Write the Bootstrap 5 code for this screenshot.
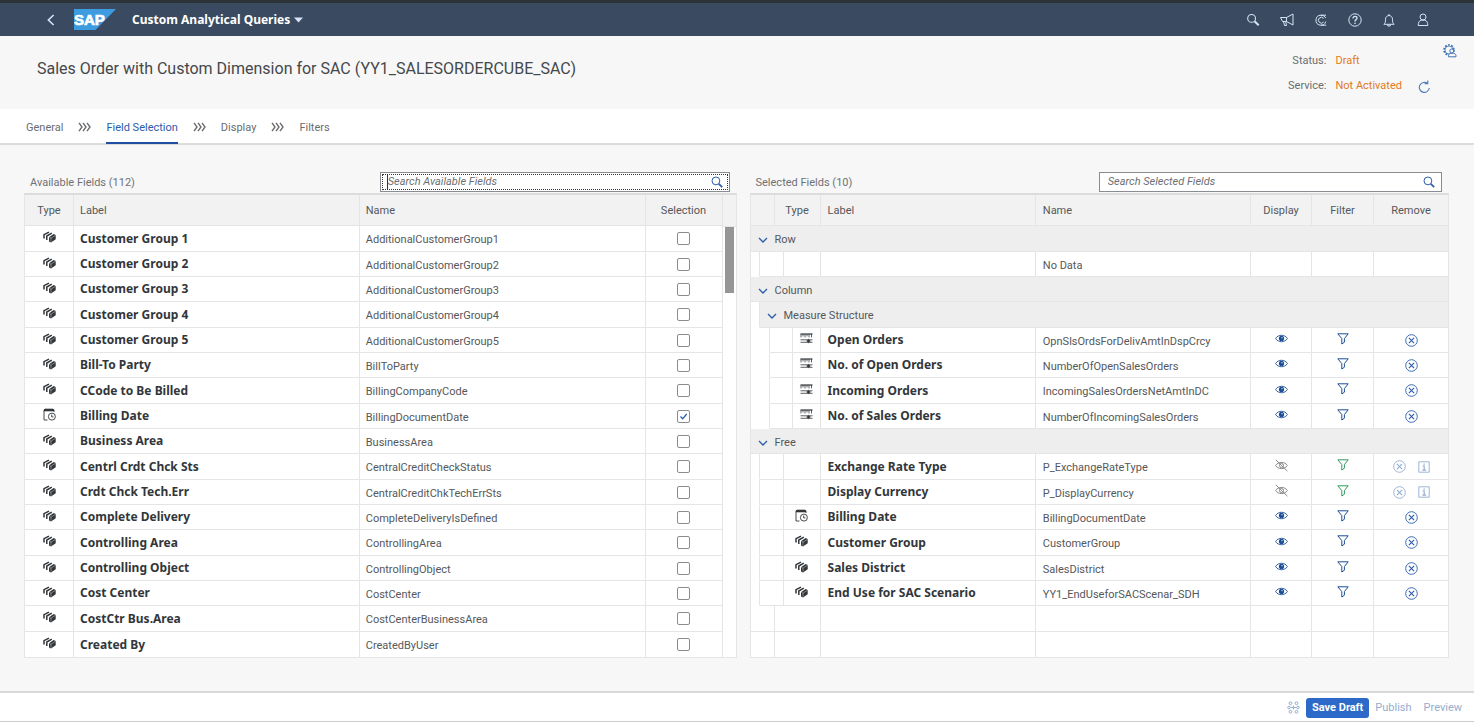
<!DOCTYPE html>
<html lang="en">
<head>
<meta charset="utf-8">
<meta name="viewport" content="width=device-width, initial-scale=1">
<title>Custom Analytical Queries</title>
<link rel="stylesheet" href="https://cdn.jsdelivr.net/npm/bootstrap@5.3.0/dist/css/bootstrap.min.css">
<style>
:root { --line: #e5e5e5; --blue: #2a5ca8; --ink: #32363a; --soft: #6a6d70; --orange: #e07b1c; }
body { font-family: Roboto, "Liberation Sans", sans-serif; font-size: 11px; line-height: 16px; color: #55585b; background: #f7f7f7; }
svg { display: block; fill: none; stroke: currentColor; }
button { font-size: inherit; line-height: inherit; }
.plain { border: 0; background: none; padding: 0; color: inherit; display: block; }
.shell { background: #3a4a60; border-top: 3px solid #2c3336; height: 36px; color: #d5e4f5; padding: 0 42px 0 44px; }
.app-title { font: 700 12px/16px "Noto Sans", sans-serif; color: #fff; }
.shell-tools { gap: 16px; }
.object-head { height: 73px; padding: 0 17px 0 37px; }
.object-head h1 { font-size: 16px; line-height: 20px; font-weight: 400; color: #45484b; padding-bottom: 7px; }
.state { display: grid; grid-template-columns: auto auto; column-gap: 9px; row-gap: 9px; margin: 2px 5px 0 0; }
.state dt { font-weight: 400; text-align: right; color: var(--soft); }
.state dd { margin: 0; color: var(--orange); }
.steps { height: 36px; padding: 0 26px; gap: 15px; background: #fff; border-bottom: 2px solid #dcdcdc; }
.steps a { color: var(--soft); text-decoration: none; line-height: 16px; padding-top: 11px; height: 35px; display: block; }
.steps a.active { color: var(--blue); border-bottom: 2px solid #1f4ea3; }
.steps svg { color: #6a6d70; margin-top: 2px; }
main { padding: 26px 25px 33px 24px; gap: 13px; }
.pane { min-width: 0; }
.pane-left { flex: 712 1 0; }
.pane-right { flex: 699 1 0; }
.pane-head { height: 22px; padding-left: 6px; padding-right: 7px; color: #6f7275; }
.find { width: 50%; height: 20px; background: #fff; border: 1px solid #898c90; color: var(--blue); padding: 0 6px; margin-top: 1px; }
.find input { flex: 1; min-width: 0; border: 0; outline: 0; background: none; padding: 0 2px; height: 16px; color: var(--ink); }
.find input::placeholder { font-style: italic; color: #6c6f72; opacity: 1; }
.find.focused { outline: 1px dotted #333; outline-offset: -3px; }
.find.focused input { border-left: 1px solid #333; padding: 0; height: 14px; }
.gridbox { border-top: 2px solid #dcdcdc; border-left: 1px solid var(--line); border-right: 1px solid var(--line); border-bottom: 1px solid var(--line); background: #fff; }
table.fields { table-layout: fixed; width: 100%; border-collapse: separate; border-spacing: 0; }
.fields th, .fields td { border-right: 1px solid var(--line); border-bottom: 1px solid var(--line); padding: 0 6px; white-space: nowrap; overflow: hidden; text-align: left; vertical-align: middle; font-weight: 400; }
.fields thead th { background: #f2f2f2; height: 31px; padding-top: 2px; }
.fields tbody tr { height: 25px; }
.fields tbody tr:nth-child(3n+1) { height: 26px; }
.fields tbody tr:last-child > * { border-bottom: 0; }
.pane-right .fields tr > :last-child { border-right: 0; }
.pane-right .fields th, .pane-right .fields td { padding-left: 7px; }
.fields tr > .mid.mid { text-align: center; padding-left: 0; padding-right: 0; }
.fields .mid svg, .fields .mid button { margin: 0 auto; }
.fields tbody .title { font: 700 12px/16px "Noto Sans", sans-serif; color: var(--ink); }
.fields tbody .tech, .fields tbody .group { padding-top: 3px; }
.fields .kind { color: var(--ink); padding: 0 0 3px; }
.fields .see { padding: 0 0 3px; color: #1c4e94; }
.fields .group { background: #eee; }
.fields .indent { border-bottom-color: #fff; padding: 0; }
.group button { display: flex; align-items: center; gap: 7px; }
.group button svg { color: #2a5ca8; }
.tick { appearance: none; width: 13px; height: 13px; margin: 0 auto; display: block; border: 1px solid #898c90; border-radius: 2px; background: #fff; }
.tick:checked { background: #fff url("data:image/svg+xml,%3Csvg xmlns='http://www.w3.org/2000/svg' viewBox='0 0 11 11'%3E%3Cpath d='M2.5 5.5l2.2 2.3 4-4.8' fill='none' stroke='%232a5ca8' stroke-width='1.3'/%3E%3C/svg%3E"); }
.gutter { flex: 0 0 13px; }
.gutter-top { height: 32px; background: #f2f2f2; border-bottom: 1px solid var(--line); }
.thumb { width: 9px; height: 66px; background: #969696; margin-left: 2px; }
.pale { color: #93aed0; }
footer { height: 31px; background: #fff; border-top: 2px solid #d9d9d9; border-bottom: 1px solid #ccc; padding: 1px 12px 0; gap: 6px; }
.save { background: #2c69c9; color: #fff; font-weight: 700; padding: 2px 6px; border: 0; border-radius: 3px; }
.ghost { padding: 2px 0; margin-right: 6px; }
.ghost:last-child { margin-right: 0; }
</style>
</head>
<body class="d-flex flex-column min-vh-100">

<svg width="0" height="0" class="position-absolute" aria-hidden="true">
  <symbol id="cubes" viewBox="0 0 13 12"><path d="M1 7.600V3.700L6 1.200M3.800 9V5L8.800 2.200" stroke-width="1.500"/><path d="M6 6.200L10.600 3 12.700 4v4.300L8 11.600 6 10.600z" fill="currentColor" stroke="none"/><path d="M6.300 6.400l1.700.8v3.500M8 7.200l4.500-3" stroke="#fff" stroke-width=".4"/></symbol>
  <symbol id="dated" viewBox="0 0 13 13"><path d="M4.500 12H1V1.800h10V4" stroke-width=".9"/><path d="M1 2.200h10" stroke-width="2.200"/><path d="M3 .2v2M5 .2v2M7 .2v2M9 .2v2" stroke-width=".8"/><circle cx="8.900" cy="8.600" r="3.500" stroke-width=".9"/><path d="M8.700 6.600v2.300h1.800" stroke-width=".9"/></symbol>
  <symbol id="measure" viewBox="0 0 13 11"><path d="M.5 1h12" stroke-width="1.200"/><path d="M1 1v3.400M3 1v2.400M5 1v3.400M7 1v2.400M9 1v3.400M11.500 1v3.400" stroke-width=".8"/><path d="M.5 6.800h12M.5 9.300h12" stroke-width=".8"/><path d="M6.500 8L8.500 6.200l2 1.800-2 1.800z" fill="currentColor" stroke-width=".3"/></symbol>
  <symbol id="eye" viewBox="0 0 13 9"><path d="M.6 4.500C3.200.2 9.800.2 12.400 4.500 9.800 8.800 3.200 8.800.6 4.500z" stroke-width=".9"/><circle cx="6.500" cy="4.400" r="2.600" fill="currentColor" stroke="none"/><circle cx="7" cy="3.700" r=".6" fill="#fff" stroke="none"/></symbol>
  <symbol id="hidden" viewBox="0 0 13 13"><path d="M.6 6.500C3.200 2.400 9.800 2.400 12.400 6.500 9.800 10.600 3.200 10.600.6 6.500zM.8.8l11.600 11.400" stroke-width="1"/><circle cx="6.500" cy="6.500" r="2" stroke-width="1"/></symbol>
  <symbol id="funnel" viewBox="0 0 12 12"><path d="M.8.8h10.400L7.400 5.600v3.600L4.800 11V5.600z" stroke-width="1"/></symbol>
  <symbol id="cross" viewBox="0 0 13 13"><circle cx="6.500" cy="6.500" r="5.800" stroke-width=".9"/><path d="M3.900 3.900l5.200 5.200M9.100 3.900L3.900 9.100" stroke-width="1.100"/></symbol>
  <symbol id="info" viewBox="0 0 12 12"><path d="M.8.8h10.400v10.400H.8z" stroke-width=".9"/><path d="M4.600 5h1.600v4M4.300 9.200h3.800M5.500 3.100h1.300" stroke-width="1.200"/></symbol>
  <symbol id="down" viewBox="0 0 10 6"><path d="M1 1l4 4 4-4" stroke-width="1.300"/></symbol>
  <symbol id="lens" viewBox="0 0 12 12"><circle cx="4.900" cy="4.900" r="3.900" stroke-width="1"/><path d="M7.800 7.800l3.400 3.400" stroke-width="1.700"/></symbol>
  <symbol id="chevrons" viewBox="0 0 13 10"><path d="M1 .8l3 4.200-3 4.200M5 .8L8 5 5 9.200M9 .8L12 5 9 9.200" stroke-width="1.400"/></symbol>
</svg>

<header class="shell d-flex align-items-center">
  <button class="plain" aria-label="Back"><svg width="14" height="14" viewBox="0 0 14 14"><path d="M9.600 2L4.400 7l5.200 5" stroke-width="1.600"/></svg></button>
  <svg class="ms-3" width="42" height="21" viewBox="0 0 42 21" role="img" aria-label="SAP"><path d="M0 0h42L21.500 21H0z" fill="#3d9be0" stroke="none"/><text x="0" y="16" fill="#fff" stroke="#fff" stroke-width=".7" font-family="Liberation Sans, sans-serif" font-weight="700" font-size="15">SAP</text></svg>
  <button class="plain app-title d-flex align-items-center gap-1 ms-3">Custom Analytical Queries <svg width="9" height="6" viewBox="0 0 9 6"><path d="M0 .5h9L4.500 5.500z" fill="#d5e4f5" stroke="none"/></svg></button>
  <div class="shell-tools d-flex align-items-center ms-auto">
    <button class="plain" aria-label="Search"><svg width="18" height="16" viewBox="0 0 16 16"><circle cx="6.600" cy="6.400" r="3.900" stroke-width="1.100"/><path d="M9.500 9.300l4.200 4" stroke-width="2"/></svg></button>
    <button class="plain" aria-label="News"><svg width="18" height="16" viewBox="0 0 16 16"><path d="M1.500 5.500h6L14 2v11L7.500 9.500H3.500zM7.500 5.500v4M4.500 9.500l1 4h2l-.8-4"/></svg></button>
    <button class="plain" aria-label="CoPilot"><svg width="18" height="16" viewBox="0 0 16 16"><path d="M13 3.200H8A5 5 0 1 0 12.800 9.500M8 3.200A5 5 0 0 1 12.800 6" stroke-width="1"/><path d="M10.600 6.400A2.900 2.900 0 1 0 10.600 10M8 13.200h5.200" stroke-width="1"/></svg></button>
    <button class="plain" aria-label="Help"><svg width="18" height="16" viewBox="0 0 16 16"><circle cx="8" cy="8" r="6.200"/><path d="M6 6.400c0-2.700 4-2.500 4-.2 0 1.500-2 1.400-2 3.200M8 10.600v1.400" stroke-width="1.300"/></svg></button>
    <button class="plain" aria-label="Notifications"><svg width="18" height="16" viewBox="0 0 16 16"><path d="M2.800 12.300c1.500-1 1.700-2 1.700-5 0-5 7-5 7 0 0 3 .2 4 1.700 5zM6.800 12.500v1.500h2.400v-1.500M8 3.400V2"/></svg></button>
    <button class="plain" aria-label="User"><svg width="18" height="16" viewBox="0 0 16 16"><circle cx="8" cy="5" r="3"/><path d="M3.200 13.500c0-3 1-4.800 3-5.300h3.600c2 .5 3 2.300 3 5.300z"/></svg></button>
  </div>
</header>

<section class="object-head d-flex">
  <h1 class="mb-0 align-self-center">Sales Order with Custom Dimension for SAC (YY1_SALESORDERCUBE_SAC)</h1>
  <div class="ms-auto d-flex align-items-center">
    <dl class="state">
      <dt>Status:</dt><dd>Draft</dd>
      <dt>Service:</dt><dd class="d-flex align-items-center gap-3">Not Activated <button class="plain" aria-label="Refresh" style="color:#4d7cb8"><svg width="12" height="13" viewBox="0 0 12 13"><path d="M9.500 3.500A5 5 0 1 0 11.300 8M9.800.5v3.300H6.600" stroke-width="1.100"/></svg></button></dd>
    </dl>
    <button class="plain align-self-start pt-1 mt-1 ms-2" aria-label="Settings" style="color:#3f73b5"><svg width="14" height="14" viewBox="0 0 14 14"><circle cx="6" cy="6" r="5" stroke-width="1.600" stroke-dasharray="1.900 1.240"/><circle cx="6" cy="6" r="4" stroke-width=".8"/><circle cx="8.800" cy="7" r="2" fill="#f7f7f7"/><path d="M5.500 12.800v-1.300c0-3 7.500-3 7.500 0v1.300z" fill="#f7f7f7"/></svg></button>
  </div>
</section>

<nav class="steps d-flex align-items-center" aria-label="Steps">
  <a href="#general">General</a><svg width="13" height="10"><use href="#chevrons"/></svg>
  <a href="#fields" class="active" aria-current="step">Field Selection</a><svg width="13" height="10"><use href="#chevrons"/></svg>
  <a href="#display">Display</a><svg width="13" height="10"><use href="#chevrons"/></svg>
  <a href="#filters">Filters</a>
</nav>

<main class="d-flex flex-grow-1 align-items-start">
  <section class="pane pane-left">
    <div class="pane-head d-flex align-items-start justify-content-between">
      <label for="find-available" class="pt-1">Available Fields (112)</label>
      <div class="find focused d-flex align-items-center"><input id="find-available" type="text" placeholder="Search Available Fields"><button class="plain" aria-label="Search"><svg width="12" height="12"><use href="#lens"/></svg></button></div>
    </div>
    <div class="gridbox d-flex">
      <table class="fields">
        <colgroup><col style="width:49px"><col><col><col style="width:77px"></colgroup>
        <thead><tr><th class="mid">Type</th><th>Label</th><th>Name</th><th class="mid">Selection</th></tr></thead>
        <tbody id="available"></tbody>
      </table>
      <div class="gutter"><div class="gutter-top"></div><div class="thumb"></div></div>
    </div>
  </section>

  <section class="pane pane-right">
    <div class="pane-head d-flex align-items-start justify-content-between">
      <label for="find-selected" class="pt-1">Selected Fields (10)</label>
      <div class="find d-flex align-items-center"><input id="find-selected" type="text" placeholder="Search Selected Fields"><button class="plain" aria-label="Search"><svg width="12" height="12"><use href="#lens"/></svg></button></div>
    </div>
    <div class="gridbox">
      <table class="fields">
        <colgroup><col style="width:9px"><col style="width:10px"><col style="width:5px"><col style="width:9px"><col style="width:9px"><col style="width:28px"><col><col><col style="width:61px"><col style="width:62px"><col style="width:74px"></colgroup>
        <thead><tr><th colspan="3"></th><th colspan="3" class="mid">Type</th><th>Label</th><th>Name</th><th class="mid">Display</th><th class="mid">Filter</th><th class="mid">Remove</th></tr></thead>
        <tbody id="selected"></tbody>
      </table>
    </div>
  </section>
</main>

<footer class="d-flex align-items-center justify-content-end">
  <button class="plain pale" aria-label="Dependencies"><svg width="13" height="13" viewBox="0 0 13 13"><circle cx="3.500" cy="2.200" r="1.400"/><circle cx="9.500" cy="2.200" r="1.400"/><circle cx="2" cy="6.500" r="1.300"/><circle cx="11" cy="6.500" r="1.300"/><circle cx="3.500" cy="10.800" r="1.400"/><circle cx="9.500" cy="10.800" r="1.400"/><path d="M3.500 6.500h6M6.500 4.500v4"/></svg></button>
  <button class="save">Save Draft</button>
  <button class="plain pale ghost">Publish</button>
  <button class="plain pale ghost">Preview</button>
</footer>

<script src="https://cdn.jsdelivr.net/npm/bootstrap@5.3.0/dist/js/bootstrap.bundle.min.js"></script>
<script>
const icon = (id, w, h) => `<svg width="${w}" height="${h}" aria-hidden="true"><use href="#${id}"/></svg>`;
const kinds = { cubes: icon('cubes', 13, 12), dated: icon('dated', 13, 13), measure: icon('measure', 13, 11), '': '' };

const available = [
  ['Customer Group 1', 'AdditionalCustomerGroup1'], ['Customer Group 2', 'AdditionalCustomerGroup2'],
  ['Customer Group 3', 'AdditionalCustomerGroup3'], ['Customer Group 4', 'AdditionalCustomerGroup4'],
  ['Customer Group 5', 'AdditionalCustomerGroup5'], ['Bill-To Party', 'BillToParty'],
  ['CCode to Be Billed', 'BillingCompanyCode'], ['Billing Date', 'BillingDocumentDate', 'dated'],
  ['Business Area', 'BusinessArea'], ['Centrl Crdt Chck Sts', 'CentralCreditCheckStatus'],
  ['Crdt Chck Tech.Err', 'CentralCreditChkTechErrSts'], ['Complete Delivery', 'CompleteDeliveryIsDefined'],
  ['Controlling Area', 'ControllingArea'], ['Controlling Object', 'ControllingObject'],
  ['Cost Center', 'CostCenter'], ['CostCtr Bus.Area', 'CostCenterBusinessArea'], ['Created By', 'CreatedByUser']
];
document.getElementById('available').innerHTML = available.map(([label, name, kind = 'cubes']) =>
  `<tr><td class="mid kind">${kinds[kind]}</td><td class="title">${label}</td><td class="tech">${name}</td>
   <td class="mid"><input class="tick" type="checkbox" aria-label="${label}"${kind === 'dated' ? ' checked' : ''}></td></tr>`).join('');

const group = (text, level) =>
  `<tr>${level ? '<td class="indent"></td>' : ''}<td class="group" colspan="${11 - level}"><button class="plain">${icon('down', 10, 6)}${text}</button></td></tr>`;
const lead = (level, kind) => level === 2
  ? `<td class="indent" colspan="2"></td><td colspan="3"></td><td class="mid kind">${kinds[kind]}</td>`
  : `<td class="indent"></td><td colspan="3"></td><td class="mid kind" colspan="2">${kinds[kind]}</td>`;
const field = (level, kind, label, name, locked) => `<tr>${lead(level, kind)}<td class="title">${label}</td><td class="tech">${name}</td>
  <td class="mid see"><button class="plain" aria-label="Display"${locked ? ' style="color:#85888b"' : ''}>${locked ? icon('hidden', 13, 13) : icon('eye', 13, 9)}</button></td>
  <td class="mid see"><button class="plain" aria-label="Filter"${locked ? ' style="color:#2f9a63"' : ''}>${icon('funnel', 12, 12)}</button></td>
  <td class="mid">${locked
    ? `<div class="d-flex justify-content-center align-items-center pale"><button class="plain m-0 me-2" aria-label="Remove" disabled>${icon('cross', 13, 13)}</button><button class="plain m-0 ms-1" aria-label="Info">${icon('info', 12, 12)}</button></div>`
    : `<button class="plain" aria-label="Remove" style="color:#2a5ca8">${icon('cross', 13, 13)}</button>`}</td></tr>`;
const blank = '<tr><td colspan="3"></td><td colspan="3"></td><td></td><td></td><td></td><td></td><td></td></tr>';

document.getElementById('selected').innerHTML = [
  group('Row', 0),
  `<tr>${lead(1, '')}<td></td><td class="tech">No Data</td><td></td><td></td><td></td></tr>`,
  group('Column', 0),
  group('Measure Structure', 1),
  field(2, 'measure', 'Open Orders', 'OpnSlsOrdsForDelivAmtInDspCrcy'),
  field(2, 'measure', 'No. of Open Orders', 'NumberOfOpenSalesOrders'),
  field(2, 'measure', 'Incoming Orders', 'IncomingSalesOrdersNetAmtInDC'),
  field(2, 'measure', 'No. of Sales Orders', 'NumberOfIncomingSalesOrders'),
  group('Free', 0),
  field(1, '', 'Exchange Rate Type', 'P_ExchangeRateType', true),
  field(1, '', 'Display Currency', 'P_DisplayCurrency', true),
  field(1, 'dated', 'Billing Date', 'BillingDocumentDate'),
  field(1, 'cubes', 'Customer Group', 'CustomerGroup'),
  field(1, 'cubes', 'Sales District', 'SalesDistrict'),
  field(1, 'cubes', 'End Use for SAC Scenario', 'YY1_EndUseforSACScenar_SDH'),
  blank, blank
].join('');
</script>
</body>
</html>
